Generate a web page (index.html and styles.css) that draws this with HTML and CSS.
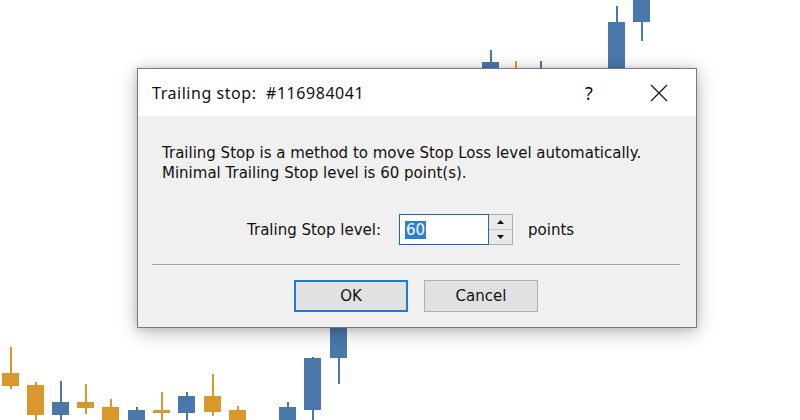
FILE: index.html
```html
<!DOCTYPE html>
<html>
<head>
<meta charset="utf-8">
<link rel="stylesheet" href="styles.css">
</head>
<body>
<div class="chart">
  <div class="c orange" style="left:2px;top:347px;height:42px"><i style="top:26px;height:13px"></i></div>
  <div class="c orange" style="left:27px;top:382px;height:43px"><i style="top:3px;height:30px"></i></div>
  <div class="c blue" style="left:52px;top:381px;height:39px"><i style="top:21px;height:13px"></i></div>
  <div class="c orange" style="left:77px;top:384px;height:30px"><i style="top:18px;height:6px"></i></div>
  <div class="c orange" style="left:102px;top:399px;height:30px"><i style="top:8px;height:20px"></i></div>
  <div class="c blue" style="left:128px;top:407px;height:20px"><i style="top:3px;height:15px"></i></div>
  <div class="c orange" style="left:153px;top:392px;height:33px"><i style="top:18px;height:3px"></i></div>
  <div class="c blue" style="left:178px;top:392px;height:33px"><i style="top:4px;height:17px"></i></div>
  <div class="c orange" style="left:204px;top:374px;height:42px"><i style="top:22px;height:16px"></i></div>
  <div class="c orange" style="left:229px;top:406px;height:20px"><i style="top:4px;height:15px"></i></div>
  <div class="c blue" style="left:279px;top:402px;height:20px"><i style="top:5px;height:15px"></i></div>
  <div class="c blue" style="left:304px;top:357px;height:68px"><i style="top:1px;height:52px"></i></div>
  <div class="c blue" style="left:330px;top:320px;height:64px"><i style="top:0;height:38px"></i></div>
  <div class="c blue" style="left:482px;top:50px;height:30px"><i style="top:12px;height:18px"></i></div>
  <div class="c orange" style="left:507px;top:61px;height:20px"><i style="top:10px;height:10px"></i></div>
  <div class="c blue" style="left:532px;top:61px;height:20px"><i style="top:10px;height:10px"></i></div>
  <div class="c blue" style="left:608px;top:6px;height:74px"><i style="top:16px;height:58px"></i></div>
  <div class="c blue" style="left:633px;top:-10px;height:51px"><i style="top:0;height:32px"></i></div>
</div>

<div class="dialog">
  <div class="titlebar">
    <span class="title">Trailing stop:&nbsp; #116984041</span>
    <span class="help">?</span>
    <svg class="close" width="18" height="18" viewBox="0 0 18 18"><path d="M1 1 L17 17 M17 1 L1 17" stroke="#1a1a1a" stroke-width="1.3" fill="none"/></svg>
  </div>
  <div class="content">
    <div class="msg">
      <div>Trailing Stop is a method to move Stop Loss level automatically.</div>
      <div>Minimal Trailing Stop level is 60 point(s).</div>
    </div>
    <div class="row">
      <span class="label">Traling Stop level:</span>
      <div class="input"><span class="sel">60</span></div>
      <div class="spin">
        <div class="sbtn"><svg width="7" height="4" viewBox="0 0 7 4"><path d="M0 4 L3.5 0 L7 4Z" fill="#111"/></svg></div>
        <div class="sbtn"><svg width="7" height="4" viewBox="0 0 7 4"><path d="M0 0 L3.5 4 L7 0Z" fill="#111"/></svg></div>
      </div>
      <span class="unit">points</span>
    </div>
    <div class="sep"></div>
    <div class="buttons">
      <div class="btn default">OK</div>
      <div class="btn">Cancel</div>
    </div>
  </div>
</div>
</body>
</html>
```
FILE: styles.css
```css
html,body{margin:0;padding:0;background:#fff;}
body{width:800px;height:420px;overflow:hidden;position:relative;font-family:"DejaVu Sans",sans-serif;}

.chart{position:absolute;left:0;top:0;width:800px;height:420px;}
.c{position:absolute;width:17px;}
.c::before{content:"";position:absolute;left:8px;top:0;bottom:0;width:2px;background:var(--col);}
.c i{position:absolute;left:0;width:17px;background:var(--col);}
.blue{--col:#4a78aa;}
.orange{--col:#da982c;}

.dialog{position:absolute;left:137px;top:68px;width:560px;height:260px;box-sizing:border-box;border:1px solid #7a7a7a;background:#f0f0f0;box-shadow:0 4px 18px rgba(0,0,0,0.28),0 0 6px rgba(0,0,0,0.12);display:flex;flex-direction:column;}
.titlebar{height:47px;background:#fff;display:flex;align-items:center;padding-left:14px;}
.title{font-family:"Noto Sans",sans-serif;font-size:16px;letter-spacing:0.55px;color:#111;flex:1;}
.help{font-family:"Noto Sans",sans-serif;font-size:18px;color:#111;width:20px;margin-right:45px;}
.close{margin-right:28px;}

.content{flex:1;padding:27px 16px 0 14px;font-size:15px;color:#111;}
.msg{padding-left:10px;line-height:20px;}
.row{display:flex;align-items:center;margin:31px 0 0 95px;height:31px;}
.label{margin-right:18px;}
.input{width:90px;height:31px;box-sizing:border-box;border:1px solid #1b64b8;background:#fff;display:flex;align-items:center;padding-left:5px;}
.sel{background:#2f7fd6;color:#fff;line-height:18px;padding:0 1px;}
.spin{width:24px;height:31px;box-sizing:border-box;border:1px solid #adadad;border-left:none;display:flex;flex-direction:column;background:#f0f0f0;}
.sbtn{flex:1;display:flex;align-items:center;justify-content:center;background:#e9e9e9;}
.sbtn+.sbtn{border-top:1px solid #c8c8c8;}
.unit{margin-left:15px;}
.sep{margin-top:19px;border-top:1px solid #a0a0a0;}
.buttons{display:flex;justify-content:center;gap:16px;margin-top:15px;}
.btn{width:114px;height:32px;box-sizing:border-box;border:1px solid #adadad;background:#e1e1e1;display:flex;align-items:center;justify-content:center;}
.btn.default{border:2px solid #1a7ad4;}
```
